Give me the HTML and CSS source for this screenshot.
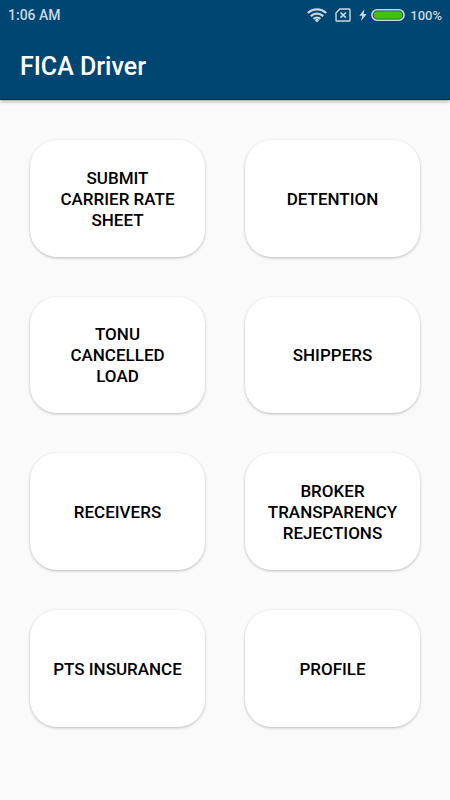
FILE: index.html
```html
<!DOCTYPE html>
<html lang="en">

<head>
  <meta charset="UTF-8">
  <meta name="viewport" content="width=device-width, initial-scale=1.0">
  <title>FICA Driver</title>

  <link rel="stylesheet" href="styles.css">
</head>

<body>
  <header class="header">
    <div class="status">
      <span class="status__time">1:06 AM</span>
      <div class="status__icons">
        <svg class="status__wifi" width="20" height="14" viewBox="0 0 20 14" fill="none" stroke="currentColor" stroke-width="2.2">
          <path d="M.8 5C6 .1 14 .1 19.2 5" />
          <path d="M3.8 8.1C7.3 4.9 12.7 4.9 16.2 8.1" />
          <path d="M6.6 10.9C8.5 9.2 11.5 9.2 13.4 10.9" />
          <circle cx="10" cy="12.2" r="1.7" fill="currentColor" stroke="none" />
        </svg>
        <svg class="status__sim" width="16" height="14" viewBox="0 0 16 14" fill="none" stroke="currentColor" stroke-width="1.4">
          <path d="M4.8 1H14.2Q15 1 15 1.8V12.2Q15 13 14.2 13H1.8Q1 13 1 12.2V5Z" />
          <path d="M5.5 4.5L10.9 9.7M10.9 4.5L5.5 9.7" stroke-width="1.7" />
        </svg>
        <svg class="status__bolt" width="8" height="12" viewBox="0 0 8 12" fill="currentColor">
          <path d="M5.5 0L.3 6.8H3.3L2 12L7.7 4.9H4.6Z" />
        </svg>
        <svg class="status__battery" width="34" height="12" viewBox="0 0 34 12">
          <rect x=".9" y=".8" width="32.2" height="10.4" rx="5.2" fill="none" stroke="currentColor" stroke-width="1.6" />
          <rect x="2.6" y="2.2" width="28.8" height="7.6" rx="3.8" fill="#43c100" />
        </svg>
        <span class="status__level">100%</span>
      </div>
    </div>
    <h1 class="header__title">FICA Driver</h1>
  </header>

  <main class="menu">
    <button class="menu__item" type="button">SUBMIT<br>CARRIER RATE<br>SHEET</button>
    <button class="menu__item" type="button">DETENTION</button>
    <button class="menu__item" type="button">TONU<br>CANCELLED<br>LOAD</button>
    <button class="menu__item" type="button">SHIPPERS</button>
    <button class="menu__item" type="button">RECEIVERS</button>
    <button class="menu__item" type="button">BROKER<br>TRANSPARENCY<br>REJECTIONS</button>
    <button class="menu__item" type="button">PTS INSURANCE</button>
    <button class="menu__item" type="button">PROFILE</button>
  </main>
</body>

</html>
```

FILE: styles.css
```css
* {
  box-sizing: border-box;
}

body {
  margin: 0;
  background: #fafafa;
  font-family: Roboto, sans-serif;
}

.header {
  background: #004673;
  border-bottom: 1px solid #00296b;
  box-shadow: 0 1px 4px rgba(0, 0, 0, .4);
  color: #fff;
}

.status {
  display: flex;
  align-items: center;
  justify-content: space-between;
  height: 30px;
  padding: 0 8px;
  color: #c8d7e1;
  font-size: 14px;
  font-weight: 500;
}

.status__icons {
  display: flex;
  align-items: center;
}

.status__wifi {
  margin-right: 8px;
}

.status__sim {
  margin-right: 8px;
}

.status__bolt {
  margin-right: 4px;
}

.status__level {
  margin-left: 5px;
  font-size: 13px;
}

.header__title {
  margin: 0;
  padding: 22px 20px 18px;
  font-size: 25px;
  font-weight: 500;
  line-height: 29px;
}

.menu {
  display: grid;
  grid-template-columns: 1fr 1fr;
  gap: 40px;
  padding: 40px 30px;
}

.menu__item {
  aspect-ratio: 3 / 2;
  padding: 2px 0 0;
  border: 0;
  border-radius: 27px;
  background: #fff;
  box-shadow: 0 1px 3px rgba(0, 0, 0, .25);
  color: #000;
  font-family: inherit;
  font-size: 17px;
  font-weight: 500;
  line-height: 21px;
  cursor: pointer;
}
```
